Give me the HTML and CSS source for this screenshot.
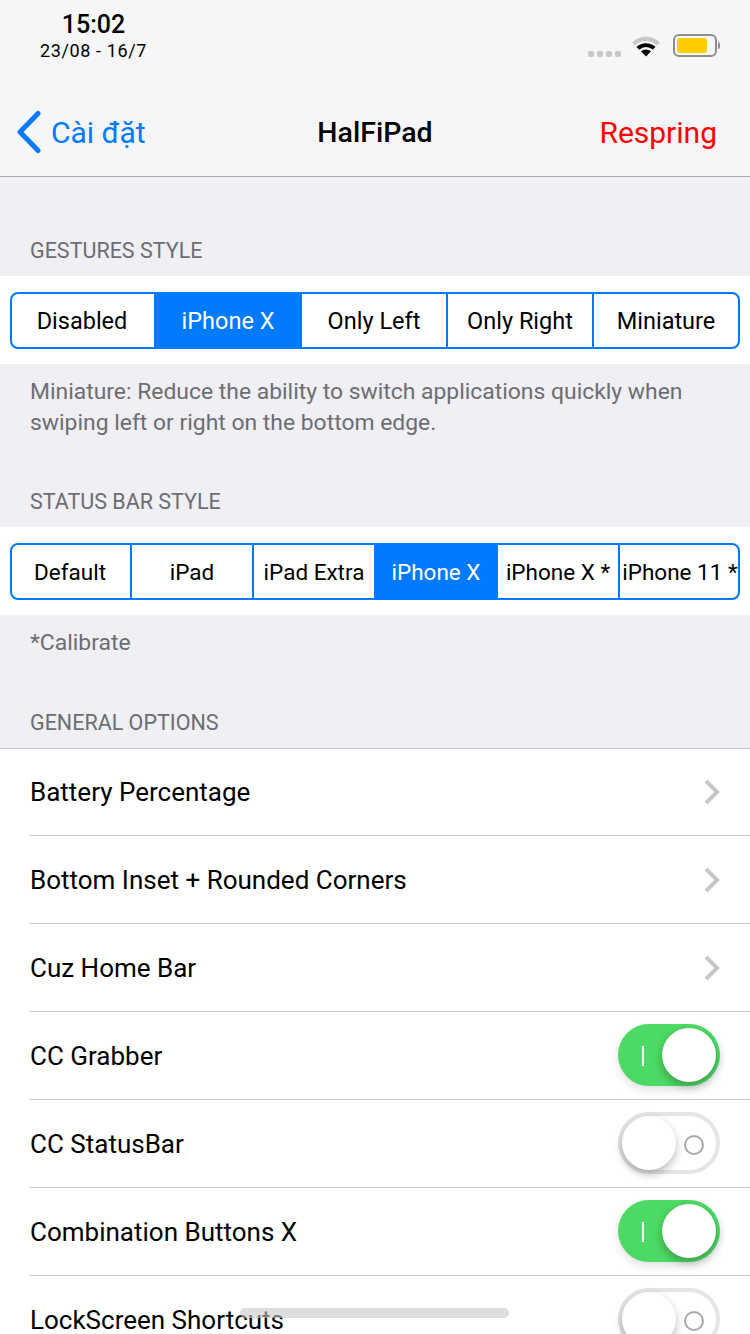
FILE: index.html
```html
<!DOCTYPE html>
<html lang="en">
<head>
  <meta charset="UTF-8">
  <meta name="viewport" content="width=device-width, initial-scale=1.0">
  <title>HalFiPad</title>
  <link rel="stylesheet" href="styles.css">
</head>
<body>
  <div class="screen">
    <header class="top">
      <div class="status">
        <div class="clock">
          <div class="time">15:02</div>
          <div class="date">23/08 - 16/7</div>
        </div>
        <div class="status-icons">
          <div class="signal"><i></i><i></i><i></i><i></i></div>
          <svg class="wifi" width="30" height="24" viewBox="0 0 30 24">
            <path d="M1 8.5 A20 20 0 0 1 29 8.5 L26 11.5 A16 16 0 0 0 4 11.5 Z" fill="#c8c8c8"/>
            <path d="M5.5 13 A14 14 0 0 1 24.5 13 L21.8 15.7 A10.2 10.2 0 0 0 8.2 15.7 Z" fill="#000"/>
            <path d="M10 17.3 A7.6 7.6 0 0 1 20 17.3 L15 22.5 Z" fill="#000"/>
          </svg>
          <div class="battery"><div class="battery-body"><div class="battery-fill"></div></div><div class="battery-cap"></div></div>
        </div>
      </div>
      <nav class="nav">
        <a class="back">
          <svg width="26" height="44" viewBox="0 0 26 44"><path d="M22 3.5 L4 22 L22 40.5" fill="none" stroke="#007aff" stroke-width="5" stroke-linecap="round" stroke-linejoin="round"/></svg>
          <span>Cài đặt</span>
        </a>
        <div class="nav-title">HalFiPad</div>
        <a class="nav-action">Respring</a>
      </nav>
    </header>

    <h2 class="section first">GESTURES STYLE</h2>
    <div class="seg-band">
      <div class="seg">
        <div class="seg-item">Disabled</div>
        <div class="seg-item active">iPhone X</div>
        <div class="seg-item">Only Left</div>
        <div class="seg-item">Only Right</div>
        <div class="seg-item">Miniature</div>
      </div>
    </div>
    <p class="note">Miniature: Reduce the ability to switch applications quickly when swiping left or right on the bottom edge.</p>

    <h2 class="section second">STATUS BAR STYLE</h2>
    <div class="seg-band">
      <div class="seg tight">
        <div class="seg-item">Default</div>
        <div class="seg-item">iPad</div>
        <div class="seg-item">iPad Extra</div>
        <div class="seg-item active">iPhone X</div>
        <div class="seg-item">iPhone X *</div>
        <div class="seg-item">iPhone 11 *</div>
      </div>
    </div>
    <p class="note">*Calibrate</p>

    <h2 class="section third">GENERAL OPTIONS</h2>
    <ul class="list">
      <li class="row"><span>Battery Percentage</span><svg class="chevron" width="20" height="28" viewBox="0 0 20 28"><path d="M6 3 L17 14 L6 25" fill="none" stroke="#c7c7cc" stroke-width="4"/></svg></li>
      <li class="row"><span>Bottom Inset + Rounded Corners</span><svg class="chevron" width="20" height="28" viewBox="0 0 20 28"><path d="M6 3 L17 14 L6 25" fill="none" stroke="#c7c7cc" stroke-width="4"/></svg></li>
      <li class="row"><span>Cuz Home Bar</span><svg class="chevron" width="20" height="28" viewBox="0 0 20 28"><path d="M6 3 L17 14 L6 25" fill="none" stroke="#c7c7cc" stroke-width="4"/></svg></li>
      <li class="row"><span>CC Grabber</span><div class="switch on"><div class="knob"></div></div></li>
      <li class="row"><span>CC StatusBar</span><div class="switch"><div class="knob"></div></div></li>
      <li class="row"><span>Combination Buttons X</span><div class="switch on"><div class="knob"></div></div></li>
      <li class="row"><span>LockScreen Shortcuts</span><div class="switch"><div class="knob"></div></div></li>
    </ul>

    <div class="home-bar"></div>
  </div>
</body>
</html>
```

FILE: styles.css
```css
* {
  box-sizing: border-box;
}
html, body {
  margin: 0;
  padding: 0;
}
body {
  font-family: Roboto, "Noto Sans", sans-serif;
  color: #000;
  background: #efeff4;
}
.screen {
  position: relative;
  width: 750px;
  height: 1334px;
  overflow: hidden;
  background: #efeff4;
}

/* status bar + nav */
.top {
  height: 177px;
  background: #f6f6f8;
  border-bottom: 1px solid #a9a9ab;
}
.status {
  height: 88px;
  display: flex;
  justify-content: space-between;
  padding: 10px 30px 0 40px;
}
.clock {
  width: 107px;
  text-align: center;
}
.time {
  font-size: 25px;
  line-height: 30px;
  font-weight: 500;
}
.date {
  font-size: 18px;
  line-height: 20px;
  margin-top: 1px;
  letter-spacing: 0.6px;
}
.status-icons {
  display: flex;
  align-items: flex-start;
  padding-top: 24px;
}
.signal {
  display: flex;
  gap: 3px;
  margin-top: 17px;
  margin-right: 10px;
}
.signal i {
  display: block;
  width: 6px;
  height: 6px;
  border-radius: 2px;
  background: #c8c8c8;
}
.wifi {
  margin-right: 12px;
}
.battery {
  display: flex;
  align-items: center;
  height: 23px;
}
.battery-body {
  width: 44px;
  height: 23px;
  border: 2px solid #8e8e8e;
  border-radius: 6px;
  padding: 2px 8px 2px 2px;
}
.battery-fill {
  height: 100%;
  background: #ffcc00;
  border-radius: 3px;
}
.battery-cap {
  width: 2px;
  height: 7px;
  margin-left: 1px;
  background: #8e8e8e;
  border-radius: 0 2px 2px 0;
}
.nav {
  height: 88px;
  display: grid;
  grid-template-columns: 1fr auto 1fr;
  align-items: center;
  padding: 0 16px;
  font-size: 30px;
}
.back {
  display: flex;
  align-items: center;
  gap: 9px;
  color: #007aff;
}
.nav-title {
  font-size: 28.5px;
  font-weight: 500;
}
.nav-action {
  justify-self: end;
  margin-right: 17px;
  color: #ff0000;
}

/* sections */
.section {
  margin: 0;
  padding-left: 30px;
  font-size: 21.5px;
  line-height: 26px;
  font-weight: 400;
  color: #6d6d72;
  padding-bottom: 12px;
}
.section.first {
  padding-top: 61px;
}
.section.second {
  margin-top: 51px;
}
.section.third {
  margin-top: 52px;
}
.seg-band {
  background: #fff;
  padding: 16px 10px 15px;
}
.seg {
  display: flex;
  height: 57px;
  border: 2px solid #007aff;
  border-radius: 8px;
  overflow: hidden;
  font-size: 23.5px;
}
.seg.tight {
  font-size: 22.5px;
}
.seg-item {
  flex: 1 1 0;
  min-width: 0;
  display: flex;
  align-items: center;
  justify-content: center;
  white-space: nowrap;
  border-left: 2px solid #007aff;
}
/* first divider falls under the outer border */
.seg-item:first-child {
  margin-left: -4px;
}
.seg.tight .seg-item:last-child {
  margin-right: -2px;
}
.seg-item.active {
  background: #007aff;
  color: #fff;
}
.note {
  margin: 0;
  padding: 12px 30px 0;
  font-size: 22.9px;
  line-height: 31px;
  color: #6d6d72;
}

/* list */
.list {
  margin: 0;
  padding: 0 0 0 30px;
  list-style: none;
  background: #fff;
  border-top: 1px solid #c8c7cc;
}
.row {
  height: 88px;
  display: flex;
  align-items: center;
  justify-content: space-between;
  padding-right: 30px;
  font-size: 26px;
  border-bottom: 1px solid #c8c7cc;
}
.row:first-child {
  height: 87px;
}

/* switches */
.switch {
  position: relative;
  width: 102px;
  height: 62px;
  margin-top: -1px;
  border-radius: 31px;
  border: 4px solid #e5e5e5;
  background: #fff;
}
.switch::after {
  content: "";
  box-sizing: border-box;
  position: absolute;
  left: 62px;
  top: 19px;
  width: 20px;
  height: 20px;
  border: 2.5px solid #a8a8a8;
  border-radius: 50%;
}
.knob {
  position: absolute;
  left: 0;
  top: 0;
  width: 54px;
  height: 54px;
  border-radius: 50%;
  background: #fff;
  box-shadow: 0 4px 8px rgba(0, 0, 0, 0.28);
}
.switch.on {
  border: 0;
  background: #4cd964;
  box-shadow: 0 4px 10px rgba(0, 0, 0, 0.12);
}
.switch.on::after {
  left: 24px;
  top: 22px;
  width: 2px;
  height: 20px;
  border: 0;
  border-radius: 0;
  background: #fff;
}
.switch.on .knob {
  left: 44px;
  top: 4px;
}

.home-bar {
  position: absolute;
  left: 240px;
  top: 1308px;
  width: 269px;
  height: 10px;
  border-radius: 5px;
  background: rgba(200, 200, 200, 0.6);
}
```
